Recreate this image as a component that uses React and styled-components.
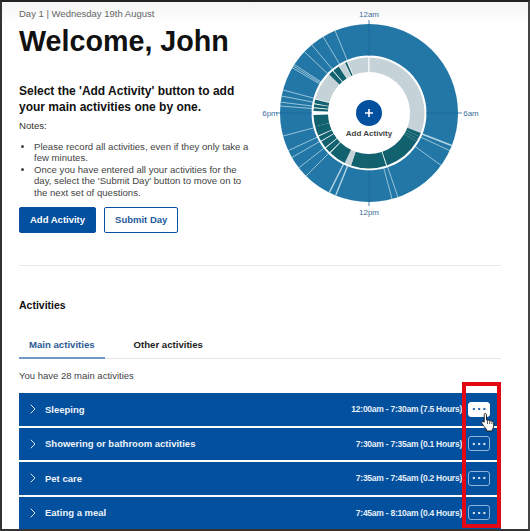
import React from 'react';
import styled, { createGlobalStyle } from 'styled-components';
import { MoreHorizontal, ChevronRight } from 'lucide-react';

const GlobalStyle = createGlobalStyle`
    html, body {
        margin: 0;
        padding: 0;
        background: #fff;
    }
    body {
        font-family: "Liberation Sans", Arial, sans-serif;
        color: #222;
    }
`;

const Frame = styled.div`
    position: relative;
    box-sizing: border-box;
    width: 530px;
    height: 531px;
    overflow: hidden;
    border-top: 2px solid #222;
    border-left: 2px solid #333;
    border-right: 2px solid #444;
    border-bottom: 2px solid #333;
    background: linear-gradient(#f5f5f5 0, #fff 22px);
    padding: 5px 27px 0 17px;
`;

const Top = styled.section`
    display: flex;
    justify-content: space-between;
    height: 258px;
    border-bottom: 1px solid #e8e8e8;
`;

const Intro = styled.div`
    width: 232px;
`;

const DayLine = styled.div`
    font-size: 9.5px;
    line-height: 13px;
    color: #666;
`;

const Title = styled.h1`
    margin: 1px 0 0;
    font-size: 28.7px;
    line-height: 40px;
    font-weight: 700;
    white-space: nowrap;
    color: #111;
`;

const Lead = styled.h2`
    margin: 22px 0 0;
    font-size: 12px;
    line-height: 16px;
    font-weight: 700;
    color: #111;
`;

const Notes = styled.p`
    margin: 4px 0 0;
    font-size: 9.6px;
    line-height: 13px;
    color: #333;
`;

const NoteList = styled.ul`
    margin: 9px 0 0;
    padding: 0 0 0 15px;
    font-size: 9.6px;
    line-height: 11.4px;
    color: #444;
`;

const Actions = styled.div`
    display: flex;
    gap: 8px;
    margin-top: 8.5px;
`;

const Button = styled.button`
    box-sizing: border-box;
    height: 26px;
    padding: 0 10px;
    border-radius: 2px;
    border: 1px solid #0a50a0;
    background: ${p => (p.$primary ? '#03509f' : '#fff')};
    color: ${p => (p.$primary ? '#fff' : '#1d5a9c')};
    font: 700 9.5px "Liberation Sans", Arial, sans-serif;
`;

const ChartBox = styled.div`
    width: 236px;
    height: 222px;
    margin-right: 8px;
`;

const Heading = styled.h3`
    margin: 33px 0 0;
    font-size: 10.5px;
    line-height: 13px;
    font-weight: 700;
    color: #111;
`;

const Tabs = styled.div`
    display: flex;
    margin-top: 25px;
    border-bottom: 1px solid #e4e4e4;
`;

const Tab = styled.div`
    box-sizing: border-box;
    height: 22px;
    padding: 0 10px;
    margin-right: 19px;
    margin-bottom: -1px;
    font-size: 9.6px;
    line-height: 15px;
    font-weight: 700;
    color: ${p => (p.$active ? '#2a5a94' : '#222')};
    border-bottom: ${p => (p.$active ? '2px solid #6f98c4' : '0')};
`;

const Count = styled.p`
    margin: 10px 0 0;
    font-size: 9.5px;
    line-height: 13px;
    color: #444;
`;

const Rows = styled.div`
    display: flex;
    flex-direction: column;
    gap: 2px;
    margin-top: 11px;
`;

const Row = styled.div`
    display: flex;
    align-items: center;
    box-sizing: border-box;
    height: 32.5px;
    padding: 0 11px 0 6px;
    background: #03509f;
    color: #fff;
`;

const RowName = styled.span`
    flex: 1;
    margin-left: 4px;
    font-size: 9.5px;
    font-weight: 700;
    color: #eef4fa;
`;

const RowTime = styled.span`
    font-size: 8.5px;
    letter-spacing: -0.25px;
    font-weight: 700;
    color: #e6eef7;
`;

const MoreButton = styled.span`
    display: flex;
    align-items: center;
    justify-content: center;
    box-sizing: border-box;
    width: 22px;
    height: 15px;
    margin-left: 6px;
    border-radius: 3px;
    border: 1px solid ${p => (p.$hover ? '#fff' : '#8fb3da')};
    background: ${p => (p.$hover ? '#fff' : 'transparent')};
    color: ${p => (p.$hover ? '#03509f' : '#fff')};
`;

const Highlight = styled.div`
    position: absolute;
    left: 460px;
    top: 380px;
    box-sizing: border-box;
    width: 39px;
    height: 146px;
    border: 4px solid #e30613;
`;

const Cursor = styled.svg`
    position: absolute;
    left: 478px;
    top: 410px;
`;

const activities = [
    { name: 'Sleeping', time: '12:00am - 7:30am (7.5 Hours)', hover: true },
    { name: 'Showering or bathroom activities', time: '7:30am - 7:35am (0.1 Hours)' },
    { name: 'Pet care', time: '7:35am - 7:45am (0.2 Hours)' },
    { name: 'Eating a meal', time: '7:45am - 8:10am (0.4 Hours)' },
];

// clock angles in degrees, 0 is 12am
const outerLines = [
    [111.5, 1.6], [115, 0.8], [126, 0.8], [161, 0.8], [165, 0.8], [202, 1.4], [206.5, 1.4],
    [225, 0.8], [232, 0.8], [240, 0.8], [245, 0.8], [255, 0.8], [274.5, 0.8], [277, 0.8],
    [281, 0.8], [285, 0.8], [300.5, 0.8], [301.8, 0.8], [303, 0.8], [313.5, 0.8], [320, 0.8],
    [329, 0.8], [337.6, 0.8],
];

const innerSegments = [
    [0, 111, '#c5d3d8'], [111, 115, '#12616e'], [115, 118, '#12616e'], [118, 121, '#12616e'],
    [121, 161, '#12616e'], [162, 199, '#12616e'], [199, 206, '#c5d3d8'], [206, 224, '#12616e'],
    [225, 231, '#12616e'], [232, 239, '#12616e'], [240, 245, '#12616e'], [246, 256, '#12616e'],
    [256, 268, '#12616e'], [272, 275, '#12616e'], [276, 279, '#12616e'], [280, 284, '#12616e'],
    [285, 314, '#c5d3d8'], [314, 319, '#12616e'], [320, 327, '#12616e'], [327, 334, '#c5d3d8'],
    [334.5, 336.5, '#12616e'], [337.5, 359.5, '#c5d3d8'],
];

const CX = 112;
const CY = 106;

const point = (angle, radius) => {
    const a = (angle * Math.PI) / 180;
    return [CX + radius * Math.sin(a), CY - radius * Math.cos(a)];
};

const arcPath = (from, to, r1, r2) => {
    const large = to - from > 180 ? 1 : 0;
    const [x1, y1] = point(from, r2);
    const [x2, y2] = point(to, r2);
    const [x3, y3] = point(to, r1);
    const [x4, y4] = point(from, r1);
    return `M${x1} ${y1}A${r2} ${r2} 0 ${large} 1 ${x2} ${y2}L${x3} ${y3}A${r1} ${r1} 0 ${large} 0 ${x4} ${y4}Z`;
};

const ClockChart = () => (
    <svg width="236" height="222" viewBox="0 0 236 222">
        <circle cx={CX} cy={CY} r="89" fill="#2277a6" />
        {outerLines.map(([angle, width]) => {
            const [x1, y1] = point(angle, 57);
            const [x2, y2] = point(angle, 89.5);
            return <line key={angle} x1={x1} y1={y1} x2={x2} y2={y2} stroke="#b5d5e4" strokeWidth={width} />;
        })}
        <circle cx={CX} cy={CY} r="57.5" fill="#fff" />
        {innerSegments.map(([from, to, color]) => (
            <path key={from} d={arcPath(from, to, 41, 55.5)} fill={color} />
        ))}
        <path d={`M${CX} ${CY - 93}V${CY - 57}M${CX} ${CY + 57}V${CY + 93}M${CX + 57} ${CY}H${CX + 93}M${CX - 93} ${CY}H${CX - 57}`} stroke="#1d68a0" strokeWidth="0.8" fill="none" />
        <line x1={CX} y1={CY - 55.5} x2={CX} y2={CY - 41} stroke="#fff" strokeWidth="1" />
        <g fontFamily="Liberation Sans, Arial, sans-serif" fontSize="8" fill="#3a6f99" textAnchor="middle">
            <text x={CX} y={CY - 96}>12am</text>
            <text x={CX} y={CY + 102}>12pm</text>
            <text x={CX + 102} y={CY + 3}>6am</text>
            <text x={CX - 99} y={CY + 3}>6pm</text>
        </g>
        <circle cx={CX} cy={CY} r="13" fill="#03509f" />
        <path d={`M${CX - 4} ${CY}H${CX + 4}M${CX} ${CY - 4}V${CY + 4}`} stroke="#fff" strokeWidth="1.6" />
        <text x={CX} y={CY + 23} fontFamily="Liberation Sans, Arial, sans-serif" fontSize="8" fontWeight="700" fill="#444" textAnchor="middle">Add Activity</text>
    </svg>
);

export default function App() {
    return (
        <Frame>
            <GlobalStyle />
            <Top>
                <Intro>
                    <DayLine>Day 1 | Wednesday 19th August</DayLine>
                    <Title>Welcome, John</Title>
                    <Lead>Select the 'Add Activity' button to add your main activities one by one.</Lead>
                    <Notes>Notes:</Notes>
                    <NoteList>
                        <li>Please record all activities, even if they only take a few minutes.</li>
                        <li>Once you have entered all your activities for the day, select the 'Submit Day' button to move on to the next set of questions.</li>
                    </NoteList>
                    <Actions>
                        <Button $primary>Add Activity</Button>
                        <Button>Submit Day</Button>
                    </Actions>
                </Intro>
                <ChartBox>
                    <ClockChart />
                </ChartBox>
            </Top>
            <Heading>Activities</Heading>
            <Tabs>
                <Tab $active>Main activities</Tab>
                <Tab>Other activities</Tab>
            </Tabs>
            <Count>You have 28 main activities</Count>
            <Rows>
                {activities.map(item => (
                    <Row key={item.name}>
                        <ChevronRight size={16} strokeWidth={1.3} />
                        <RowName>{item.name}</RowName>
                        <RowTime>{item.time}</RowTime>
                        <MoreButton $hover={item.hover}>
                            <MoreHorizontal size={18} strokeWidth={0.9} fill="currentColor" />
                        </MoreButton>
                    </Row>
                ))}
            </Rows>
            <Highlight />
            <Cursor width="16" height="20" viewBox="0 0 16 20">
                <path d="M5 1.500c1 0 1.500.7 1.500 1.600V8l1-.2c.6-.1 1.100.2 1.300.6.6-.3 1.300-.1 1.600.4.6-.3 1.400 0 1.700.6.7-.2 1.600.3 1.600 1.200v3.200c0 1.600-.6 2.600-1.300 3.600v1.600H6.600v-1.500C5.400 16.300 3.600 13.900 2 11.500c-.5-.8-.2-1.600.4-1.900.7-.3 1.300 0 1.800.6V3.100c0-1 .2-1.600.8-1.600Z" fill="#fff" stroke="#111" strokeWidth="0.9" strokeLinejoin="round" />
                <path d="M7.500 8v4M9.700 8.600V12M11.900 9.500V12" stroke="#111" strokeWidth="0.7" />
            </Cursor>
        </Frame>
    );
}
